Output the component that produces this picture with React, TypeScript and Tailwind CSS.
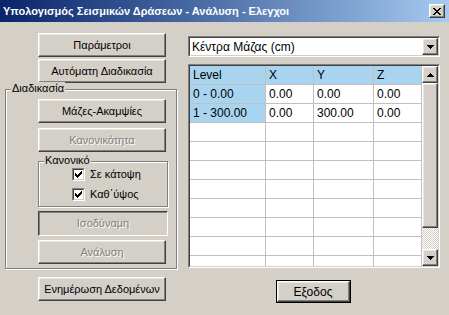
const raised =
  "border border-t-white border-l-white border-r-[#404040] border-b-[#404040] shadow-[inset_-1px_-1px_0_#808080,inset_1px_1px_0_#e8e6e0]";

const disabledText = "text-[#808080] [text-shadow:1px_1px_0_#ffffff]";

function Button({
  label,
  disabled,
  className = "",
}: {
  label: string;
  disabled?: boolean;
  className?: string;
}) {
  return (
    <div
      className={`flex items-center justify-center bg-[#d4d0c8] ${raised} ${
        disabled ? disabledText : "text-black"
      } ${className}`}
    >
      {label}
    </div>
  );
}

function GroupBox({
  title,
  className = "",
  children,
}: {
  title: string;
  className?: string;
  children: React.ReactNode;
}) {
  return (
    <div className={`relative border border-[#808080] shadow-[1px_1px_0_#ffffff] ${className}`}>
      <div className="border-l border-t border-white">{children}</div>
      <span className="absolute -top-[8px] left-[5px] bg-[#d4d0c8] px-[1px] leading-[13px]">
        {title}
      </span>
    </div>
  );
}

function CheckBox({ label }: { label: string }) {
  return (
    <div className="flex items-center gap-[5px] h-[13px]">
      <span className="w-[13px] h-[13px] border border-t-[#808080] border-l-[#808080] border-r-white border-b-white">
        <span className="flex w-full h-full items-center justify-center bg-white border border-t-[#404040] border-l-[#404040] border-r-[#d4d0c8] border-b-[#d4d0c8]">
          <svg width="7" height="7" viewBox="0 0 7 7" shapeRendering="crispEdges">
            <path
              d="M6 0h1v3h-1v1h-1v1h-1v1h-1v1h-1v-1h-1v-1h-1v-3h1v1h1v1h1v-1h1v-1h1z"
              fill="#000"
            />
          </svg>
        </span>
      </span>
      <span className="leading-[13px]">{label}</span>
    </div>
  );
}

function Arrow({ up }: { up?: boolean }) {
  return (
    <svg width="7" height="4" viewBox="0 0 7 4" shapeRendering="crispEdges">
      <path d={up ? "M3 0h1v1h1v1h1v1h1v1h-7v-1h1v-1h1v-1h1z" : "M0 0h7v1h-1v1h-1v1h-1v1h-1v-1h-1v-1h-1v-1h-1z"} fill="#000" />
    </svg>
  );
}

const rows = [
  { level: "0 - 0.00", x: "0.00", y: "0.00", z: "0.00" },
  { level: "1 - 300.00", x: "0.00", y: "300.00", z: "0.00" },
];

function DataGrid() {
  const cell = "h-[19px] border-r border-b border-[#c0c0c0] pl-[3px] flex items-center overflow-hidden whitespace-nowrap";
  const empty = Array.from({ length: 9 });
  return (
    <div className="h-[204px] border border-t-[#808080] border-l-[#808080] border-r-white border-b-white">
      <div className="h-full flex border border-t-[#404040] border-l-[#404040] border-r-[#d4d0c8] border-b-[#d4d0c8] bg-white">
        <div className="flex-1 overflow-hidden grid grid-cols-[76px_48px_60px_48px] content-start text-[12px]">
          {["Level", "X", "Y", "Z"].map((h) => (
            <div key={h} className={`${cell} bg-[#a8d4f0]`}>
              {h}
            </div>
          ))}
          {rows.map((r) => (
            <div key={r.level} className="contents">
              <div className={`${cell} bg-[#a8d4f0]`}>{r.level}</div>
              <div className={cell}>{r.x}</div>
              <div className={cell}>{r.y}</div>
              <div className={cell}>{r.z}</div>
            </div>
          ))}
          {empty.map((_, i) => (
            <div key={i} className="contents">
              <div className={cell} />
              <div className={cell} />
              <div className={cell} />
              <div className={cell} />
            </div>
          ))}
        </div>
        <div className="w-[16px] flex flex-col">
          <div className={`h-[17px] flex items-center justify-center bg-[#d4d0c8] ${raised}`}>
            <Arrow up />
          </div>
          <div className={`h-[145px] bg-[#d4d0c8] ${raised}`} />
          <div className="flex-1 bg-[repeating-conic-gradient(#ffffff_0%_25%,#d4d0c8_0%_50%)] bg-[length:2px_2px]" />
          <div className={`h-[17px] flex items-center justify-center bg-[#d4d0c8] ${raised}`}>
            <Arrow />
          </div>
        </div>
      </div>
    </div>
  );
}

export default function App() {
  return (
    <div className="w-[449px] h-[315px] overflow-hidden bg-[#d4d0c8] font-['Liberation_Sans',Arial,sans-serif] text-[11px] text-black flex flex-col">
      {/* title bar */}
      <div className="h-[22px] flex items-center justify-between pl-[3px] pr-[4px] bg-linear-to-r from-[#0a246a] to-[#a6caf0]">
        <span className="text-white font-bold text-[11px]">
          Υπολογισμός Σεισμικών Δράσεων - Ανάλυση - Ελεγχοι
        </span>
        <div className={`w-[16px] h-[14px] flex items-center justify-center bg-[#d4d0c8] ${raised}`}>
          <svg width="8" height="7" viewBox="0 0 8 7" shapeRendering="crispEdges">
            <path
              d="M0 0h2v1h1v1h2v-1h1v-1h2v1h-1v1h-1v1h-1v1h1v1h1v1h1v1h-2v-1h-1v-1h-2v1h-1v1h-2v-1h1v-1h1v-1h1v-1h-1v-1h-1v-1h-1z"
              fill="#000"
            />
          </svg>
        </div>
      </div>

      <div className="flex flex-1">
        {/* left column */}
        <div className="w-[188px] pl-[5px] pt-[11px] flex flex-col">
          <Button label="Παράμετροι" className="ml-[33px] w-[128px] h-[24px]" />
          <Button label="Αυτόματη Διαδικασία" className="ml-[33px] mt-[2px] w-[128px] h-[24px]" />

          <GroupBox title="Διαδικασία" className="mt-[6px] w-[172px]">
            <div className="pl-[31px] pt-[8px] pb-[4px] flex flex-col">
              <Button label="Μάζες-Ακαμψίες" className="w-[128px] h-[24px]" />
              <Button label="Κανονικότητα" disabled className="mt-[5px] w-[128px] h-[24px]" />
              <GroupBox title="Κανονικό" className="mt-[9px] w-[130px]">
                <div className="pl-[32px] pt-[5px] pb-[5px] flex flex-col gap-[7px]">
                  <CheckBox label="Σε κάτοψη" />
                  <CheckBox label="Καθ΄ύψος" />
                </div>
              </GroupBox>
              <div
                className={`mt-[4px] w-[130px] h-[25px] flex items-center justify-center bg-[#d4d0c8] border border-t-[#404040] border-l-[#404040] border-r-white border-b-white shadow-[inset_1px_1px_0_#808080] ${disabledText}`}
              >
                Ισοδύναμη
              </div>
              <Button label="Ανάλυση" disabled className="mt-[4px] w-[128px] h-[24px]" />
            </div>
          </GroupBox>

          <Button label="Ενημέρωση Δεδομένων" className="ml-[33px] mt-[8px] w-[128px] h-[24px]" />
        </div>

        {/* right column */}
        <div className="w-[252px] pt-[14px] flex flex-col">
          <div className="h-[21px] border border-t-[#808080] border-l-[#808080] border-r-white border-b-white">
            <div className="h-full flex items-center bg-white border border-t-[#404040] border-l-[#404040] border-r-[#d4d0c8] border-b-[#d4d0c8]">
              <span className="flex-1 pl-[2px] text-[12px]">Κέντρα Μάζας (cm)</span>
              <div className={`w-[16px] h-[17px] flex items-center justify-center bg-[#d4d0c8] ${raised}`}>
                <Arrow />
              </div>
            </div>
          </div>

          <div className="mt-[7px]">
            <DataGrid />
          </div>

          <div className="mt-[12px] flex justify-center">
            <div className="w-[75px] h-[23px] border border-black -ml-[2px]">
              <Button label="Εξοδος" className="w-full h-full text-[12px]" />
            </div>
          </div>
        </div>
      </div>
    </div>
  );
}
